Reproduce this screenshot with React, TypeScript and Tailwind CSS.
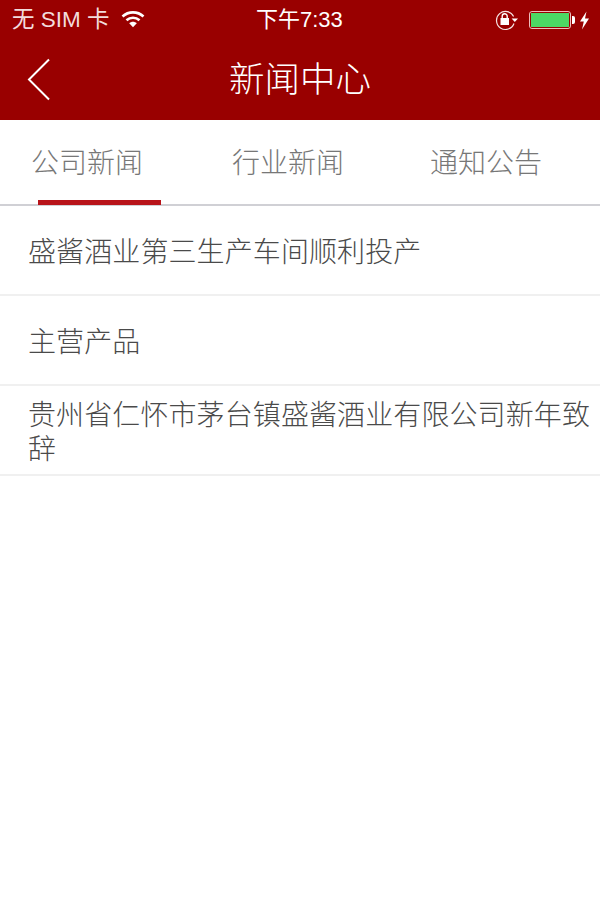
const cjk = { fontFamily: '"Noto Sans CJK SC", sans-serif' };
const statusFont = { fontFamily: '"Liberation Sans", "Noto Sans CJK SC", sans-serif' };

const tabs = [
  { label: '公司新闻', gap: 'ml-[31px]' },
  { label: '行业新闻', gap: 'ml-[89px]' },
  { label: '通知公告', gap: 'ml-[86px]' },
];

const news = [
  '盛酱酒业第三生产车间顺利投产',
  '主营产品',
  '贵州省仁怀市茅台镇盛酱酒业有限公司新年致辞',
];

function WifiIcon() {
  return (
    <svg width="24" height="18" viewBox="0 0 24 18" className="ml-[11px] -mt-[2px]">
      <path d="M1.5 6.5C7.5 1 16.5 1 22.5 6.5" fill="none" stroke="#fff" strokeWidth="2.6" />
      <path d="M5.5 10.3C9.3 6.8 14.7 6.8 18.5 10.3" fill="none" stroke="#fff" strokeWidth="2.6" />
      <path d="M8.2 13.2C10.5 11.2 13.5 11.2 15.8 13.2L12 17.2Z" fill="#fff" />
    </svg>
  );
}

function RotationLockIcon() {
  return (
    <svg width="24" height="22" viewBox="0 0 24 22">
      <path d="M19 14.5A9 9 0 1 1 18.6 7.5" fill="none" stroke="#f6e3e3" strokeWidth="1.2" />
      <path d="M16.6 9.5H23L19.8 13Z" fill="#fff" />
      <rect x="5.5" y="9" width="8.5" height="7" fill="#fff" />
      <path d="M7.2 9V7.2a2.5 2.5 0 0 1 5 0V9" fill="none" stroke="#fff" strokeWidth="1.4" />
    </svg>
  );
}

function Battery() {
  return (
    <div className="flex items-center ml-[10px]">
      <div className="w-[42px] h-[18px] rounded-[3px] border border-[#eebcbc] p-[1px]">
        <div className="w-full h-full bg-[#4cd964]" />
      </div>
      <div className="w-[3px] h-[8px] bg-white rounded-r-[2px] ml-[1px]" />
    </div>
  );
}

function BoltIcon() {
  return (
    <svg width="11" height="19" viewBox="0 0 11 19" className="ml-[4px]">
      <path d="M7.5 0.5L1 10.5H4.8L3 18.5L10 7.5H6Z" fill="#fff" />
    </svg>
  );
}

export default function App() {
  return (
    <div className="w-[600px] h-[900px] bg-white overflow-hidden" style={cjk}>
      <div className="h-[120px] bg-[#990000] text-white">
        <div className="h-[40px] flex items-center justify-between relative pl-[12px] pr-[10px]">
          <div className="flex items-center text-[22.5px] text-[#f2dcdc]" style={statusFont}>
            <span>无 SIM 卡</span>
            <WifiIcon />
          </div>
          <div className="absolute left-[256px] top-[6px] text-[22px] leading-[28px] font-normal" style={statusFont}>
            下午7:33
          </div>
          <div className="flex items-center">
            <RotationLockIcon />
            <Battery />
            <BoltIcon />
          </div>
        </div>
        <div className="h-[80px] flex items-center justify-center relative pb-[6px]">
          <svg width="26" height="44" viewBox="0 0 26 44" className="absolute left-[26px] top-[17px]">
            <path d="M23 2.5L3 22.5L23 42.5" fill="none" stroke="#fff" strokeWidth="2" />
          </svg>
          <span className="text-[35.5px] font-light leading-none">新闻中心</span>
        </div>
      </div>

      <div className="h-[86px] flex items-start border-b-2 border-[#d0d0d5] relative pt-[23px]">
        {tabs.map((tab) => (
          <span key={tab.label} className={`${tab.gap} text-[28px] leading-[36px] text-[#777777] font-light`}>
            {tab.label}
          </span>
        ))}
        <div className="absolute left-[38px] bottom-[-1px] w-[123px] h-[5px] bg-[#b8141a]" />
      </div>

      {news.map((item) => (
        <div key={item} className="h-[90px] flex items-center pl-[28px] pr-[8px] border-b-2 border-[#f0f0f0]">
          <span className="text-[28px] leading-[34px] tracking-[0.1px] text-[#4a4a4a] font-light">{item}</span>
        </div>
      ))}
    </div>
  );
}
